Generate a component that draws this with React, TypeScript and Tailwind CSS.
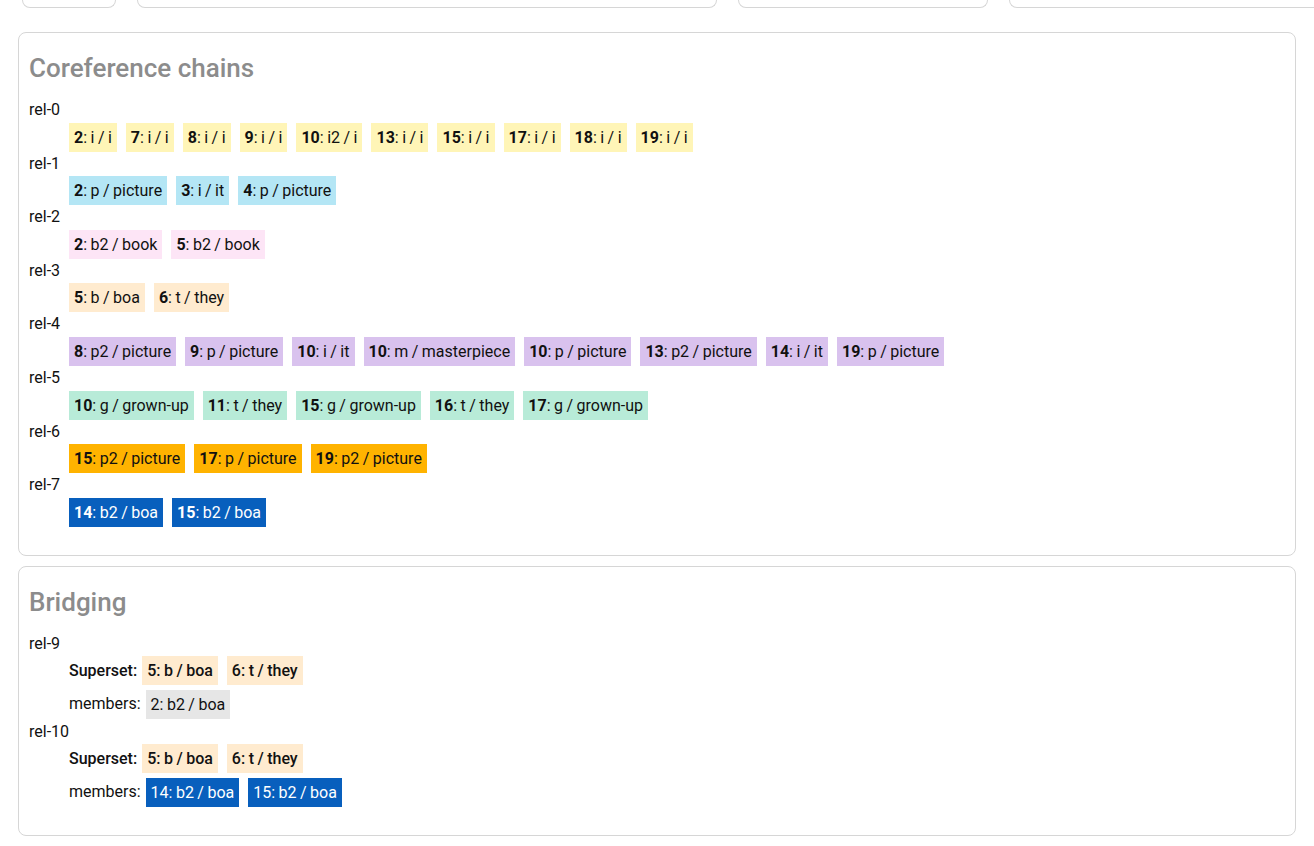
import React from "react"

type Mention = { n: string; t: string }
type Chain = { id: string; color: string; dark?: boolean; items: Mention[] }

const m = (s: string): Mention => {
  const [n, t] = s.split(": ")
  return { n, t }
}

const CHAINS: Chain[] = [
  {
    id: "rel-0",
    color: "bg-[#fff5b7]",
    items: ["2: i / i", "7: i / i", "8: i / i", "9: i / i", "10: i2 / i", "13: i / i", "15: i / i", "17: i / i", "18: i / i", "19: i / i"].map(m),
  },
  { id: "rel-1", color: "bg-[#b4e6f5]", items: ["2: p / picture", "3: i / it", "4: p / picture"].map(m) },
  { id: "rel-2", color: "bg-[#fde5f6]", items: ["2: b2 / book", "5: b2 / book"].map(m) },
  { id: "rel-3", color: "bg-[#ffebcf]", items: ["5: b / boa", "6: t / they"].map(m) },
  {
    id: "rel-4",
    color: "bg-[#d9c2ee]",
    items: ["8: p2 / picture", "9: p / picture", "10: i / it", "10: m / masterpiece", "10: p / picture", "13: p2 / picture", "14: i / it", "19: p / picture"].map(m),
  },
  {
    id: "rel-5",
    color: "bg-[#b8ebd8]",
    items: ["10: g / grown-up", "11: t / they", "15: g / grown-up", "16: t / they", "17: g / grown-up"].map(m),
  },
  { id: "rel-6", color: "bg-[#ffb300]", items: ["15: p2 / picture", "17: p / picture", "19: p2 / picture"].map(m) },
  { id: "rel-7", color: "bg-[#085fbd]", dark: true, items: ["14: b2 / boa", "15: b2 / boa"].map(m) },
]

const BRIDGES = [
  {
    id: "rel-9",
    superset: { color: "bg-[#ffebcf]", items: ["5: b / boa", "6: t / they"].map(m) },
    members: { color: "bg-[#e6e6e6]", dark: false, items: ["2: b2 / boa"].map(m) },
  },
  {
    id: "rel-10",
    superset: { color: "bg-[#ffebcf]", items: ["5: b / boa", "6: t / they"].map(m) },
    members: { color: "bg-[#085fbd]", dark: true, items: ["14: b2 / boa", "15: b2 / boa"].map(m) },
  },
]

function Chip({ mention, color, dark, boldNum = true }: { mention: Mention; color: string; dark?: boolean; boldNum?: boolean }) {
  return (
    <span className={`inline-block px-[5px] py-[2px] leading-[25px] ${color} ${dark ? "text-white" : "text-[#111]"}`}>
      <span className={boldNum ? "font-bold" : ""}>{mention.n}</span>: {mention.t}
    </span>
  )
}

function Card({ title, pb, children }: { title: string; pb: string; children: React.ReactNode }) {
  return (
    <section className={`border border-[#d6d6d6] rounded-lg px-[10px] pt-[10px] ${pb}`}>
      <h2 className="text-[26px] leading-[36px] text-[#8c8c8c] font-medium mt-[7px] mb-[12px] [word-spacing:0px]">{title}</h2>
      {children}
    </section>
  )
}

export default function App() {
  return (
    <div
      className="min-h-screen bg-white text-[16px] text-[#111] [word-spacing:-0.5px]"
      style={{ fontFamily: "Roboto, 'Noto Sans', sans-serif" }}
    >
      {/* bottoms of the cards above, scrolled out of view */}
      <div className="flex gap-[21px] pl-[22px]">
        <div className="w-[94px] h-2 border border-t-0 border-[#d6d6d6] rounded-b-lg" />
        <div className="w-[580px] h-2 border border-t-0 border-[#d6d6d6] rounded-b-lg" />
        <div className="w-[250px] h-2 border border-t-0 border-[#d6d6d6] rounded-b-lg" />
        <div className="flex-1 h-2 border border-t-0 border-r-0 border-[#d6d6d6] rounded-bl-lg" />
      </div>

      <div className="mx-[18px] mt-[24px] flex flex-col gap-[10px]">
        <Card title="Coreference chains" pb="pb-[28px]">
          {CHAINS.map((c) => (
            <div key={c.id}>
              <div className="h-[24.6px] leading-[24px]">{c.id}</div>
              <div className="flex flex-wrap gap-[9px] pl-[40px]">
                {c.items.map((it, i) => (
                  <Chip key={i} mention={it} color={c.color} dark={c.dark} />
                ))}
              </div>
            </div>
          ))}
        </Card>

        <Card title="Bridging" pb="pb-[27px]">
          {BRIDGES.map((b) => (
            <div key={b.id}>
              <div className="leading-[24px]">{b.id}</div>
              <div className="pl-[40px]">
                <div className="flex items-center gap-[9px] h-[30px] font-medium">
                  <span className="mr-[-4px]">Superset:</span>
                  {b.superset.items.map((it, i) => (
                    <Chip key={i} mention={it} color={b.superset.color} boldNum={false} />
                  ))}
                </div>
                <div className="flex items-center gap-[9px] h-[31px] mt-[3px]">
                  <span className="mr-[-4px]">members:</span>
                  {b.members.items.map((it, i) => (
                    <Chip key={i} mention={it} color={b.members.color} dark={b.members.dark} boldNum={false} />
                  ))}
                </div>
              </div>
            </div>
          ))}
        </Card>
      </div>
    </div>
  )
}
